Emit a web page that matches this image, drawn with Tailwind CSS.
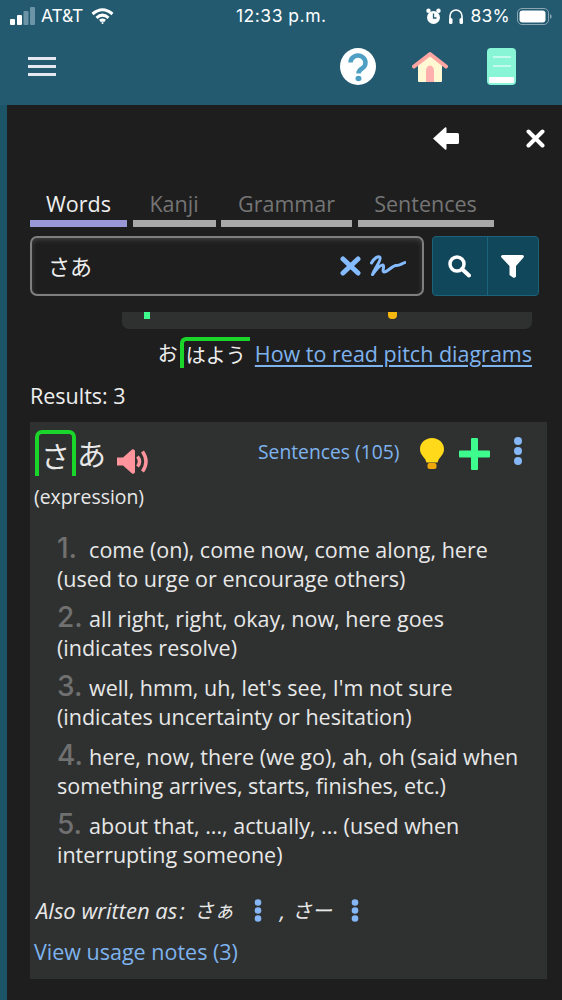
<!DOCTYPE html>
<html lang="ja">
<head>
<meta charset="utf-8">
<script src="https://cdn.jsdelivr.net/npm/@tailwindcss/browser@4"></script>
</head>
<body class="m-0">
<div class="w-[562px] h-[1000px] overflow-hidden bg-[#1c5468] flex flex-col font-['Open_Sans','Noto_Sans_CJK_JP',sans-serif]">
  <!-- Header -->
  <header class="h-[105px] shrink-0 bg-[#235a70] text-white">
    <div class="h-[32px] flex items-center justify-between pl-[10px] pr-[9px] font-['Inter',sans-serif] text-[17.5px] relative">
      <div class="flex items-center gap-[6px]">
        <svg width="25" height="18" viewBox="0 0 25 18"><rect x="0" y="12" width="5" height="6" rx="1" fill="#fff"/><rect x="7" y="8" width="5" height="10" rx="1" fill="#fff"/><rect x="13.5" y="4" width="5" height="14" rx="1" fill="#6b95a6"/><rect x="20" y="0" width="5" height="18" rx="1" fill="#6b95a6"/></svg>
        <span class="tracking-[-0.2px]">AT&amp;T</span>
        <svg class="ml-[2px]" width="23" height="17" viewBox="0 0 23 17" fill="none" stroke="#fff" stroke-width="3"><path d="M1.5 6 Q11.5 -2.5 21.5 6"/><path d="M5.5 9.8 Q11.5 4.5 17.5 9.8"/><path d="M9 13 Q11.5 11 14 13"/><circle cx="11.5" cy="15" r="1" fill="#fff" stroke="none"/></svg>
      </div>
      <span class="absolute left-[236px] tracking-[0.5px]">12:33 p.m.</span>
      <div class="flex items-center">
        <svg width="15" height="17" viewBox="0 0 15 17"><circle cx="7.5" cy="9.5" r="6.5" fill="#fff"/><circle cx="2.5" cy="2.8" r="2.2" fill="#fff"/><circle cx="12.5" cy="2.8" r="2.2" fill="#fff"/><path d="M7.5 5.5v4.5h3" stroke="#235a70" stroke-width="1.3" fill="none"/></svg>
        <svg class="ml-[7px]" width="16" height="17" viewBox="0 0 16 17" fill="none"><path d="M2 12V8a6 6 0 0 1 12 0v4" stroke="#fff" stroke-width="1.6"/><rect x="1" y="10" width="3.5" height="6" rx="1.5" fill="#fff"/><rect x="11.5" y="10" width="3.5" height="6" rx="1.5" fill="#fff"/></svg>
        <span class="ml-[7px] tracking-[0.2px]">83%</span>
        <svg class="ml-[7px]" width="36" height="17" viewBox="0 0 36 17"><rect x="0.5" y="0.5" width="31" height="16" rx="4.5" fill="none" stroke="#8aa6b3"/><rect x="2.5" y="2.5" width="26" height="12" rx="3" fill="#fff"/><path d="M33 6v5a2.6 2.6 0 0 0 1.7-2.5A2.6 2.6 0 0 0 33 6z" fill="#8aa6b3"/></svg>
      </div>
    </div>
    <nav class="flex items-center h-[73px] pl-[28px] pb-[4px]">
      <button class="w-[28px] h-[19px] flex flex-col justify-between" aria-label="menu">
        <span class="block w-full h-[3px] bg-[#e6e8f0]"></span><span class="block w-full h-[3px] bg-[#e6e8f0]"></span><span class="block w-full h-[3px] bg-[#e6e8f0]"></span>
      </button>
      <svg class="ml-[284px]" width="36" height="37" viewBox="0 0 36 37"><ellipse cx="18" cy="18.5" rx="18" ry="18.5" fill="#fff"/><path d="M10.5 14.5a7.5 7 0 1 1 11.5 6c-2.400 1.500-3.500 2.500-3.500 5" fill="none" stroke="#4f9fc4" stroke-width="4.500"/><ellipse cx="18.500" cy="30.500" rx="3" ry="2.800" fill="#4f9fc4"/></svg>
      <svg class="ml-[36px]" width="36" height="32" viewBox="0 0 36 32"><path d="M6 13 18 4l12 9v17a1 1 0 0 1-1 1H7a1 1 0 0 1-1-1z" fill="#fff8d2"/><path d="M14 31V20a4 5.500 0 0 1 8 0v11z" fill="#ffb0ae"/><path d="M2 15.500 18 3l16 12.500" fill="none" stroke="#ffa5a2" stroke-width="4" stroke-linecap="round" stroke-linejoin="round"/></svg>
      <svg class="ml-[39px]" width="29" height="37" viewBox="0 0 29 37"><rect width="29" height="37" rx="4" fill="#87f5d6"/><rect x="2" y="29" width="25" height="6" rx="1" fill="#fff"/><path d="M6 9h18M6 18h18" stroke="#fff" stroke-width="1.200"/></svg>
    </nav>
  </header>

  <!-- Main panel -->
  <main class="flex-1 ml-[7px] bg-[#1e1e1e] text-white flex flex-col relative overflow-hidden">
    <div class="h-[84px] shrink-0 flex items-start justify-end pt-[22px] pr-[17px] gap-[67px]">
      <svg width="26" height="23" viewBox="0 0 26 23" fill="#fff"><path d="M0 11.500 12 0.500a1 1 0 0 1 1.500.8V6h11a1.500 1.500 0 0 1 1.500 1.500v8a1.500 1.500 0 0 1-1.500 1.500h-11v4.700a1 1 0 0 1-1.500.8z"/></svg>
      <svg class="mt-[2px]" width="19" height="19" viewBox="0 0 19 19" stroke="#fff" stroke-width="4" stroke-linecap="round"><path d="M2.500 2.500l14 14M16.500 2.500l-14 14"/></svg>
    </div>

    <!-- Tabs -->
    <div class="flex gap-[5.500px] ml-[23px] h-[38px] shrink-0 text-[21.500px] leading-[30px]">
      <div class="w-[97px] text-center border-b-[7px] border-[#9a97d6] text-[#eeeeee]">Words</div>
      <div class="w-[83px] text-center border-b-[7px] border-[#a8a8a8] text-[#757575]">Kanji</div>
      <div class="w-[131px] text-center border-b-[7px] border-[#a8a8a8] text-[#757575]">Grammar</div>
      <div class="w-[136px] text-center border-b-[7px] border-[#a8a8a8] text-[#757575]">Sentences</div>
    </div>

    <!-- Search -->
    <div class="flex ml-[23px] mt-[9px] h-[60px] shrink-0 gap-[8px]">
      <div class="w-[394px] rounded-[7px] border-2 border-[#7f7f7f] bg-[#1e1e1e] shadow-[inset_0_2px_5px_rgba(255,255,255,0.15)] flex items-center pl-[16px] pr-[16px] text-[22px]">
        <span class="flex-1 text-[#eeeeee]">さあ</span>
        <svg width="21" height="20" viewBox="0 0 21 20" stroke="#85bcff" stroke-width="5" stroke-linecap="round"><path d="M3 3l15 14M18 3 3 17"/></svg>
        <svg class="ml-[9px]" width="36" height="22" viewBox="0 0 36 22" fill="none" stroke="#85bcff" stroke-width="3" stroke-linecap="round" stroke-linejoin="round"><path d="M1.500 8C4 3 8.500 0.500 10 2.500 11.500 5 5 13 2.500 19.500 6.500 14 11 9.500 13 10c2 1-1.500 6.500 1 7 3 .5 9-7 12-6.500 2.500.4 4-.8 9-3"/></svg>
      </div>
      <div class="w-[107px] flex rounded-[4px] border-[1.500px] border-[#1d6379] bg-[#10475a]">
        <div class="w-[55px] border-r-[1.500px] border-[#1d6379] flex items-center justify-center">
          <svg width="24" height="24" viewBox="0 0 24 24" fill="none" stroke="#fff" class="-ml-[3px]"><circle cx="10" cy="10" r="7" stroke-width="3.500"/><path d="M15 15l7 6.500" stroke-width="4" stroke-linecap="round"/></svg>
        </div>
        <div class="flex-1 flex items-center justify-center">
          <svg width="23" height="23" viewBox="0 0 23 23" fill="#fff" class="-ml-[2px]"><path d="M0 1.500A1.500 1.500 0 0 1 1.500 0h20A1.500 1.500 0 0 1 22.500 2.500L15 11v10a2 2 0 0 1-3 1.500l-3.500-2.500V11L.5 2.500A1.500 1.500 0 0 1 0 1.500z"/></svg>
        </div>
      </div>
    </div>

    <!-- Scrolled content -->
    <div class="flex-1 mt-[16px] pl-[23px] pr-[15px]">
      <div class="ml-[92px] w-[410px] h-[17px] bg-[#2f3131] rounded-b-[7px] relative">
        <span class="absolute left-[22px] top-0 w-[6px] h-[7px] bg-[#3dfb8d]"></span>
        <span class="absolute left-[266px] top-0 w-[9px] h-[7px] rounded-b-[4px] bg-[#f6b70f]"></span>
      </div>
      <div class="mt-[8px] flex justify-end items-end pr-[15px] text-[20px] leading-[31px]">
        <span class="text-[#eeeeee] mr-[2px] font-['Noto_Sans_CJK_JP',sans-serif]">お</span>
        <span class="h-[31px] w-[70px] border-l-[4px] border-t-[4px] border-[#1bd62a] rounded-tl-[6px] pl-[2px] leading-[27px] text-[#eeeeee] font-['Noto_Sans_CJK_JP',sans-serif] whitespace-nowrap">はよう</span>
        <a class="ml-[5px] text-[21.500px] leading-[28px] text-[#7eb3ee] underline underline-offset-[3px] decoration-[1.500px] whitespace-nowrap">How to read pitch diagrams</a>
      </div>
      <p class="mt-[13px] text-[21.500px] leading-[30px] text-[#eeeeee]">Results: 3</p>

      <!-- Result card -->
      <article class="mt-[11px] h-[557px] bg-[#2f3131] relative pt-[8px] text-[#e8e8e8]">
        <div class="flex items-start h-[48px]">
          <div class="ml-[5px] flex items-start">
            <span class="w-[41px] h-[46px] border-[4px] border-b-0 border-[#1bd62a] rounded-t-[7px] flex items-center justify-center text-[29px] leading-none font-['Noto_Sans_CJK_JP',sans-serif]">さ</span>
            <span class="ml-[1px] mt-[5px] text-[29px] leading-[36px] font-['Noto_Sans_CJK_JP',sans-serif]">あ</span>
            <svg class="ml-[11px] mt-[18px]" width="31" height="27" viewBox="0 0 31 27" fill="#ff949c"><path d="M0 9.500h6L15 1.500a2 2 0 0 1 3 1.500v21a2 2 0 0 1-3 1.500L6 17.500H0z"/><path d="M20.500 8.500q4 5 0 10M25.500 3.500q7 10 0 20" fill="none" stroke="#ff949c" stroke-width="3.500"/></svg>
          </div>
          <a class="absolute left-[228px] top-[15px] text-[19.300px] leading-[30px] text-[#7eb3ee] whitespace-nowrap">Sentences (105)</a>
          <svg class="absolute left-[390px] top-[16px]" width="24" height="32" viewBox="0 0 24 32"><path d="M12 0C5 0 0 5 0 11c0 5 3 7 5 10 1 1.500 1 3 1.500 3.500h11c.5-.5.5-2 1.500-3.500 2-3 5-5 5-10C24 5 19 0 12 0z" fill="#ffd91a"/><rect x="7.500" y="25" width="9" height="6" rx="2" fill="#f0a70c"/></svg>
          <svg class="absolute left-[429px] top-[16px]" width="31" height="32" viewBox="0 0 31 32" fill="#3dfb8d"><rect x="12" width="7" height="32" rx="1"/><rect y="12.500" width="31" height="7" rx="1"/></svg>
          <svg class="absolute left-[482px] top-[15px]" width="12" height="28" viewBox="0 0 12 28" fill="#85b6f5"><circle cx="6" cy="4" r="4"/><circle cx="6" cy="14" r="4"/><circle cx="6" cy="24" r="4"/></svg>
        </div>
        <p class="ml-[4px] mt-[6px] text-[19.400px] leading-[26px]">(expression)</p>
        <ol class="ml-[27px] mt-[25px] text-[21.500px] leading-[29px] w-[470px]">
          <li class="mb-[11px]"><span class="inline-block w-[26.500px] text-[28px] leading-[20px] font-medium text-[#707070] font-['Inter',sans-serif]">1.</span> come (on), come now, come along, here (used to urge or encourage others)</li>
          <li class="mb-[11px]"><span class="inline-block w-[26.500px] text-[28px] leading-[20px] font-medium text-[#707070] font-['Inter',sans-serif]">2.</span> all right, right, okay, now, here goes (indicates resolve)</li>
          <li class="mb-[11px]"><span class="inline-block w-[26.500px] text-[28px] leading-[20px] font-medium text-[#707070] font-['Inter',sans-serif]">3.</span> well, hmm, uh, let's see, I'm not sure (indicates uncertainty or hesitation)</li>
          <li class="mb-[11px]"><span class="inline-block w-[26.500px] text-[28px] leading-[20px] font-medium text-[#707070] font-['Inter',sans-serif]">4.</span> here, now, there (we go), ah, oh (said when something arrives, starts, finishes, etc.)</li>
          <li><span class="inline-block w-[26.500px] text-[28px] leading-[20px] font-medium text-[#707070] font-['Inter',sans-serif]">5.</span> about that, ..., actually, ... (used when interrupting someone)</li>
        </ol>
        <div class="ml-[6px] mt-[26px] flex items-center h-[30px] italic text-[22px]">
          <span>Also written as<span class="ml-[2px]">:</span></span>
          <span class="ml-[11px] text-[20px] font-['Noto_Sans_CJK_JP',sans-serif] not-italic -skew-x-12">さぁ</span>
          <svg class="ml-[18px]" width="8" height="23" viewBox="0 0 8 23" fill="#85b6f5"><circle cx="4" cy="3.500" r="3.300"/><circle cx="4" cy="11.500" r="3.300"/><circle cx="4" cy="19.500" r="3.300"/></svg>
          <span class="ml-[18px]">,</span>
          <span class="ml-[9px] text-[20px] font-['Noto_Sans_CJK_JP',sans-serif] not-italic -skew-x-12">さー</span>
          <svg class="ml-[17px]" width="8" height="23" viewBox="0 0 8 23" fill="#85b6f5"><circle cx="4" cy="3.500" r="3.300"/><circle cx="4" cy="11.500" r="3.300"/><circle cx="4" cy="19.500" r="3.300"/></svg>
        </div>
        <a class="block ml-[4px] mt-[12px] text-[21.500px] leading-[30px] text-[#7eb3ee]">View usage notes (3)</a>
      </article>
    </div>
  </main>
</div>
</body>
</html>
